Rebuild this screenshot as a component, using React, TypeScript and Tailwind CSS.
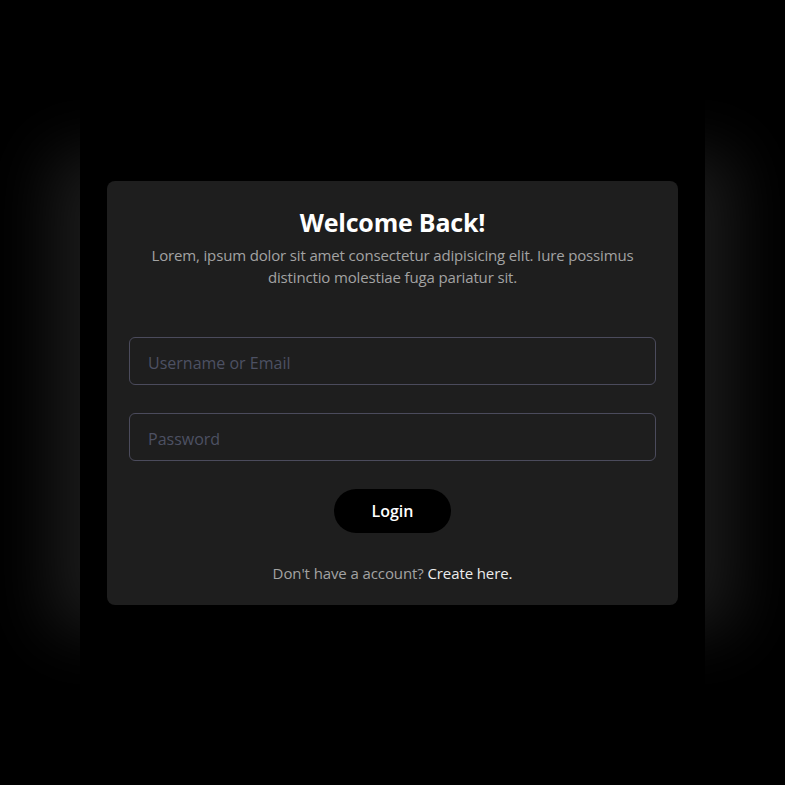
import React from "react";

const App = () => {
  return (
    <div
      className="w-full min-h-[785px] bg-black flex justify-center items-start pt-[88px]"
      style={{ fontFamily: '"Open Sans", "Noto Sans", sans-serif' }}
    >
      <div className="w-[625px] h-[608px] bg-black flex flex-col items-center shadow-[-95px_0_60px_-65px_#1b1b1b,95px_0_60px_-65px_#1b1b1b]">
        <div className="mt-[93px] w-[571px] bg-[#1e1e1e] rounded-lg px-[22px] pt-[23px] pb-[21px] flex flex-col items-center">
          <h1 className="text-[25px] leading-[36px] font-bold text-white tracking-[-0.2px]">
            Welcome Back!
          </h1>
          <p className="mt-[4px] text-[15px] leading-[22px] text-[#a3a3a3] text-center w-[510px] tracking-[-0.15px]">
            Lorem, ipsum dolor sit amet consectetur adipisicing elit. Iure
            possimus distinctio molestiae fuga pariatur sit.
          </p>

          <input
            type="text"
            placeholder="Username or Email"
            className="mt-[49px] w-full h-[48px] rounded-md border border-[#4b4b5c] bg-transparent px-[18px] pt-[3px] text-[16px] text-white placeholder:text-[#4d5163] outline-none"
          />
          <input
            type="password"
            placeholder="Password"
            className="mt-[28px] w-full h-[48px] rounded-md border border-[#4b4b5c] bg-transparent px-[18px] pt-[3px] text-[16px] text-white placeholder:text-[#4d5163] outline-none"
          />

          <button className="mt-[28px] w-[117px] h-[44px] rounded-full bg-black text-white text-[16px] font-semibold">
            Login
          </button>

          <p className="mt-[29px] text-[15px] leading-[22px] text-[#a3a3a3] tracking-[-0.1px]">
            Don't have a account?{" "}
            <a href="#" className="text-[#ececec]">
              Create here.
            </a>
          </p>
        </div>
      </div>
    </div>
  );
};

export default App;
